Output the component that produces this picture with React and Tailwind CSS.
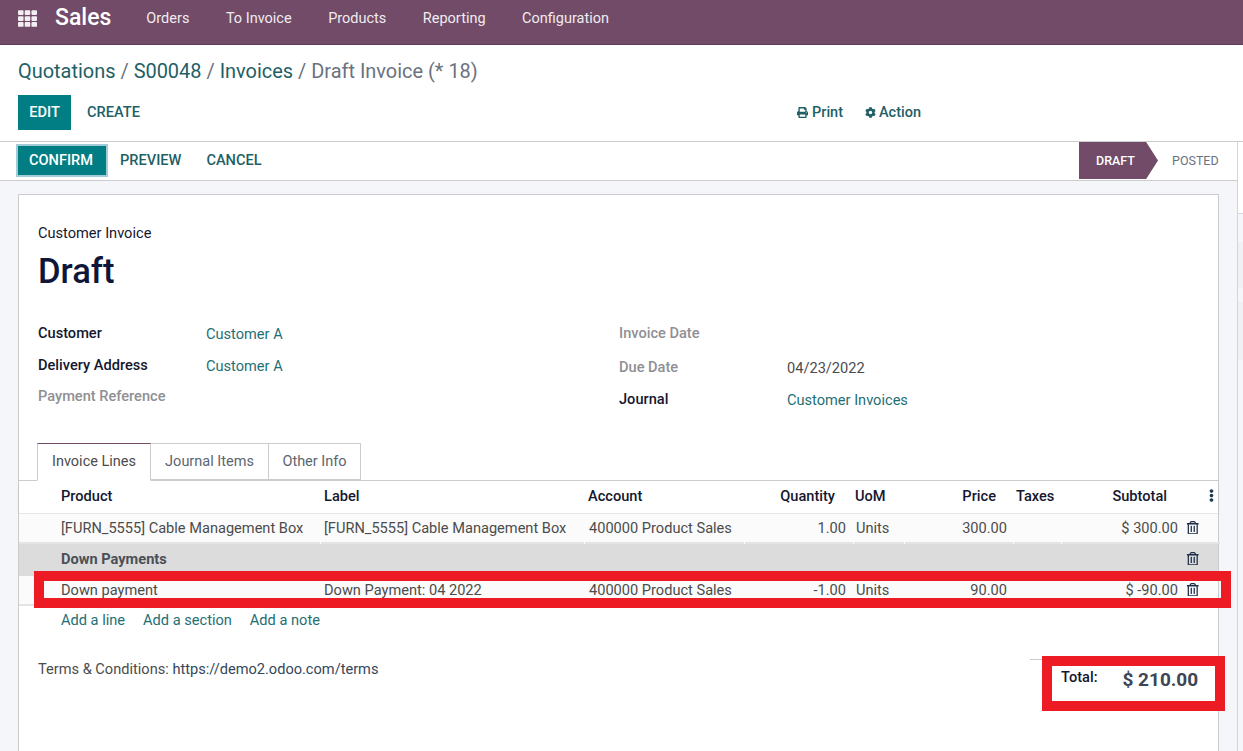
import React from 'react';
import { FaTh, FaPrint, FaCog, FaRegTrashAlt, FaEllipsisV } from 'react-icons/fa';

const navItems = ['Orders', 'To Invoice', 'Products', 'Reporting', 'Configuration'];
const rowGrid = 'grid grid-cols-[38px_263px_264px_160px_109px_51px_109px_48px_122px_37px]';

function Field({ label, value, muted, plain, className = '' }) {
  return (
    <div className={`flex ${className}`}>
      <div className={`w-[168px] font-medium ${muted ? 'text-[#8f8f94]' : 'text-[#14172f]'}`}>{label}</div>
      <div className={`pt-px ${plain ? 'text-[#4c4c4c]' : 'text-[#1f6f75]'}`}>{value}</div>
    </div>
  );
}

function Line({ product, label, qty, price, subtotal }) {
  const cell = 'h-[30px] flex items-center border-b-2 border-[#e4e4e4] pl-[4px] pb-px';
  return (
    <div className={`${rowGrid} text-[#4c4c4c] bg-[#fbfbfb]`}>
      <div className="border-b-2 border-[#e4e4e4]" />
      <div className={cell}>{product}</div>
      <div className={`${cell} ml-px !pl-[3px]`}>{label}</div>
      <div className={`${cell} ml-px`}>400000 Product Sales</div>
      <div className={`${cell} ml-px justify-end pr-[7px]`}>{qty}</div>
      <div className={`${cell} ml-px !pl-[2px]`}>Units</div>
      <div className={`${cell} ml-px justify-end pr-[6px]`}>{price}</div>
      <div className={`${cell} ml-px`} />
      <div className={`${cell} ml-px justify-end pr-[5px]`}>{subtotal}</div>
      <div className="h-[30px] pb-px flex items-center pl-[3px] border-b-2 border-[#e4e4e4]"><FaRegTrashAlt className="text-[13.5px] text-[#1f2f4a]" /></div>
    </div>
  );
}

export default function App() {
  return (
    <div className="h-[751px] w-[1243px] overflow-hidden relative bg-[#f5f6fa] font-['Roboto',sans-serif] text-[14.6px] leading-[20px]">
      {/* top nav */}
      <nav className="h-[45px] bg-[#714b67] border-b border-[#5e3f56] flex items-center text-white pb-[8px]">
        <FaTh className="ml-[18px] text-[19px] text-[#f3eef2]" />
        <div className="ml-[18px] text-[23px] font-medium leading-[28px]">Sales</div>
        <div className="ml-[35px] pt-px flex gap-[36.5px] text-[14.5px] text-[#f0ebef]">
          {navItems.map((item) => <span key={item}>{item}</span>)}
        </div>
      </nav>

      {/* breadcrumbs + buttons */}
      <div className="bg-white h-[97px] border-b border-[#ccc] pl-[18px] pt-[14px]">
        <div className="text-[19.95px] leading-[24px] text-[#6b7280]">
          <span className="text-[#1f5f66]">Quotations</span> / <span className="text-[#1f5f66]">S00048</span> / <span className="text-[#1f5f66]">Invoices</span> / Draft Invoice (* 18)
        </div>
        <div className="flex mt-[12px]">
          <div className="flex w-[779px]">
            <button className="h-[35px] w-[53px] bg-[#017e84] text-white font-medium pb-[2px]">EDIT</button>
            <button className="h-[35px] ml-[16px] text-[#1f5f66] font-medium pb-[2px]">CREATE</button>
          </div>
          <div className="flex items-center gap-[22px] text-[#1f5f66] font-medium text-[14.5px]">
            <span className="flex items-center gap-[4px]"><FaPrint className="text-[11px]" />Print</span>
            <span className="flex items-center gap-[3px]"><FaCog className="text-[11px]" />Action</span>
          </div>
        </div>
      </div>

      {/* status bar */}
      <div className="bg-white h-[39px] border-b border-[#ccc] flex items-center pl-[18px] pr-[15px]">
        <button className="h-[29px] w-[88px] mb-[2px] pr-[2px] bg-[#017e84] text-white font-medium outline-[2px] outline-[#a3ccd6]">CONFIRM</button>
        <button className="ml-[14px] mb-[2px] text-[#1f5f66] font-medium">PREVIEW</button>
        <button className="ml-[25px] mb-[2px] text-[#1f5f66] font-medium">CANCEL</button>
        <div className="ml-auto flex items-center h-[37px] mb-[1px]">
          <div className="h-[37px] w-[79px] bg-[#714b67] text-white text-[12.5px] font-medium flex items-center justify-center pr-[6px] [clip-path:polygon(0_0,85%_0,100%_50%,85%_100%,0_100%)]">DRAFT</div>
          <div className="w-[70px] pl-[14px] text-[12.5px] text-[#6b7280]">POSTED</div>
        </div>
      </div>

      {/* sheet */}
      <div className="absolute left-[18px] top-[194px] w-[1201px] h-[600px] bg-white border border-[#ccc]">
        <div className="pl-[19px] pt-[28px]">
          <div className="text-[#14172f]">Customer Invoice</div>
          <h1 className="text-[34.6px] font-medium leading-[44px] text-[#0f1638] mt-[6px]">Draft</h1>
        </div>
        <div className="pl-[19px] mt-[30px] grid grid-cols-[581px_1fr] h-[117px]">
          <div>
            <Field label="Customer" value="Customer A" />
            <Field label="Delivery Address" value="Customer A" className="mt-[11px]" />
            <Field label="Payment Reference" muted value="" className="mt-[10px]" />
          </div>
          <div>
            <Field label="Invoice Date" muted value="" />
            <Field label="Due Date" muted plain value="04/23/2022" className="mt-[14px]" />
            <Field label="Journal" value="Customer Invoices" className="mt-[11px]" />
          </div>
        </div>

        {/* tabs */}
        <div className="mt-[3px] h-[38px] border-b border-[#ccc] flex pl-[18px]">
          <div className="h-[38px] w-[114px] border border-[#ccc] border-t-[#714b67] border-b-white bg-white flex items-center justify-center text-[#4c4c4c] text-[14.5px]">Invoice Lines</div>
          <div className="h-[37px] w-[118px] border-y border-r border-[#ccc] flex items-center justify-center text-[#5c6670] text-[14.5px]">Journal Items</div>
          <div className="h-[37px] w-[92px] border-y border-r border-[#ccc] flex items-center justify-center text-[#5c6670] text-[14.5px]">Other Info</div>
        </div>

        {/* table */}
        <div className={`${rowGrid} h-[33px] items-center pb-[3px] font-medium text-[#14172f] border-b border-[#e6e6e6] shadow-[0_2px_3px_rgba(0,0,0,0.05)]`}>
          <div />
          <div className="pl-[4px]">Product</div>
          <div className="pl-[4px]">Label</div>
          <div className="pl-[4px]">Account</div>
          <div className="text-right pr-[18px]">Quantity</div>
          <div className="pl-[2px]">UoM</div>
          <div className="text-right pr-[17px]">Price</div>
          <div className="pl-[3px]">Taxes</div>
          <div className="text-right pr-[16px]">Subtotal</div>
          <div className="pl-[22px]"><FaEllipsisV className="text-[13px] text-[#1f3a4a]" /></div>
        </div>
        <Line product="[FURN_5555] Cable Management Box" label="[FURN_5555] Cable Management Box" qty="1.00" price="300.00" subtotal="$ 300.00" />
        <div className={`${rowGrid} h-[32px] items-center pb-[3px] bg-[#dcdcdc] font-bold text-[#4b4f58]`}>
          <div />
          <div className="pl-[4px] col-span-8">Down Payments</div>
          <div className="pl-[3px]"><FaRegTrashAlt className="text-[13.5px] text-[#1f2f4a]" /></div>
        </div>
        <Line product="Down payment" label="Down Payment: 04 2022" qty="-1.00" price="90.00" subtotal="$ -90.00" />

        <div className="flex gap-[18px] pl-[42px] mt-[4px] text-[#1f6f75]">
          <span>Add a line</span>
          <span>Add a section</span>
          <span>Add a note</span>
        </div>

        <div className="flex items-start pl-[19px] mt-[29px]">
          <div className="text-[#4c4c4c]">Terms &amp; Conditions: <span className="text-[#33475b]">https://demo2.odoo.com/terms</span></div>
          <div className="ml-auto w-[188px] border-t border-[#ccc] flex items-start pl-[31px] pt-[7px]">
            <span className="font-medium text-[#14172f]">Total:</span>
            <span className="ml-[25px] mt-px text-[19px] font-bold text-[#3d4654] leading-[24px]">$ 210.00</span>
          </div>
        </div>
      </div>

      {/* chatter edge */}
      <div className="absolute left-[1237px] top-[142px] right-0 bottom-0 border-l border-[#d4d5dc] flex flex-col">
        <div className="h-[72px] bg-white border-b border-[#d4d5dc]" />
        <div className="h-[28px]" />
        <div className="h-[46px] bg-[#f0f1f5]" />
        <div className="h-[14px]" />
        <div className="h-[58px] bg-[#f0f1f5]" />
      </div>

      {/* red annotation boxes over the screenshot */}
      <div className="absolute left-[34px] top-[571px] w-[1197px] h-[37px] border-[10px] border-[#ed1c24]" />
      <div className="absolute left-[1042px] top-[656px] w-[183px] h-[55px] border-[10px] border-[#ed1c24]" />
    </div>
  );
}
